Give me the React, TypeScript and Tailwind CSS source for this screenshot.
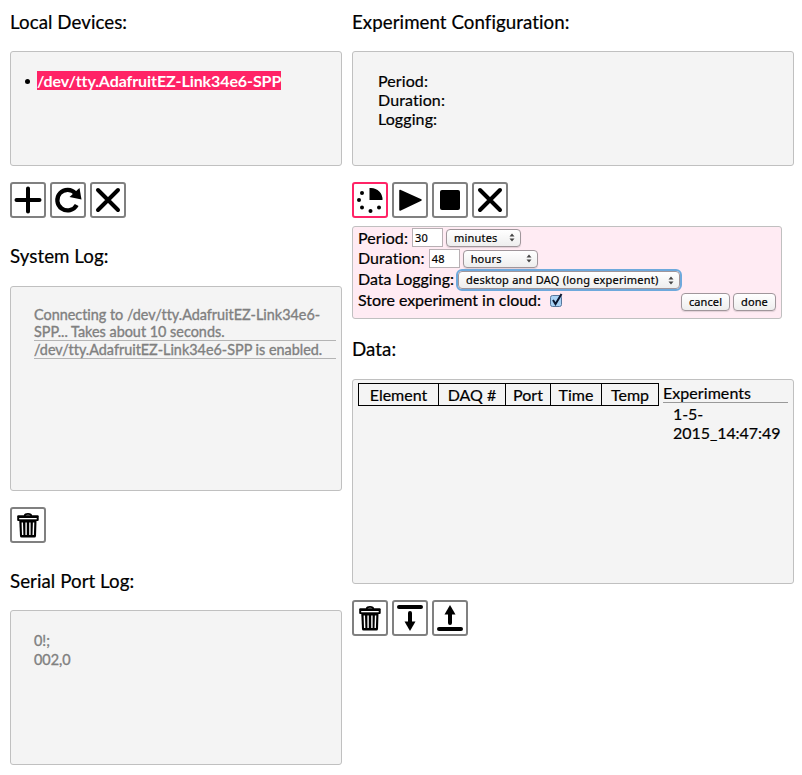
import type { ReactNode } from "react";

function IconButton({ label, active = false, children }: { label: string; active?: boolean; children: ReactNode }) {
  return (
    <button
      aria-label={label}
      className={`flex size-9 items-center justify-center rounded-[3px] border-2 bg-white ${active ? "border-[#ff2366]" : "border-[#808080]"}`}
    >
      <svg viewBox="0 0 32 32" className="size-8" fill="#000" stroke="#000" strokeWidth="0">
        {children}
      </svg>
    </button>
  );
}

const Plus = () => <path d="M16 4.500V27.500M4.500 16H27.500" strokeWidth="4" strokeLinecap="round" />;

const Cross = () => <path d="M6 6L26 26M26 6L6 26" strokeWidth="4" strokeLinecap="round" />;

const Refresh = () => (
  <>
    <path d="M24.700 21A10.300 10.300 0 1 1 23.500 9.500" fill="none" strokeWidth="4.200" />
    <path d="M27.500 4L29.500 15.500L17.500 13Z" />
  </>
);

const Trash = () => (
  <>
    <path d="M12.800 7.200V6.500Q12.800 4.800 16 4.800Q19.200 4.800 19.200 6.500V7.200" fill="none" strokeWidth="1.800" />
    <rect x="5.200" y="6.300" width="21.500" height="5.700" rx="1" />
    <rect x="7.200" y="9" width="17.500" height="1.300" fill="#fff" />
    <path d="M7.300 12H24.500L24 27Q23.900 28.500 22.500 28.500H9.500Q8.100 28.500 8 27Z" />
    <path d="M10.300 13.500L10.700 26M14.100 13.500V26M17.900 13.500V26M21.600 13.500L21.200 26" stroke="#fff" strokeWidth="1.400" />
  </>
);

function Heading({ className, children }: { className: string; children: ReactNode }) {
  return <h3 className={`text-[18.720px] leading-6 tracking-[0.060px] ${className}`}>{children}</h3>;
}

const panel = "rounded-[3px] border border-[#c0c0c0] bg-[#f4f4f4]";
const control =
  "rounded-[4px] border border-[#a0969b] bg-gradient-to-b from-white to-[#eeeeee] font-['Noto_Sans',sans-serif] text-[11px] leading-4 shadow-[0_1px_1px_rgba(0,0,0,0.12)]";

function SelectBox({ className, children }: { className: string; children: ReactNode }) {
  return (
    <button className={`flex h-[18px] items-center justify-between pr-[5px] pl-[7px] whitespace-nowrap ${control} ${className}`}>
      <span>{children}</span>
      <svg viewBox="0 0 6 9" className="h-[9px] w-[6px]" fill="#444">
        <path d="M3 0.500L5.500 3.500H0.500ZM3 8.500L0.500 5.500H5.500Z" />
      </svg>
    </button>
  );
}

function NumberBox({ children }: { children: ReactNode }) {
  return (
    <span className="ml-[4px] h-[19px] w-[31px] border border-[#b8b0b4] bg-white pl-[2px] font-['Noto_Sans',sans-serif] text-[11px] leading-[18px] tracking-[0.3px]">
      {children}
    </span>
  );
}

export default function App() {
  return (
    <main className="flex h-[775px] w-[802px] gap-[10px] overflow-hidden bg-white pl-[10px] font-[Lato,sans-serif] text-base leading-[19px] text-black [font-variant-ligatures:none] [-webkit-text-stroke:0.2px_currentColor]">
      <section className="w-[332px]">
        <Heading className="mt-[10px] mb-[17px]">Local Devices:</Heading>
        <div className={`h-[115px] pt-[19px] pl-[26px] ${panel}`}>
          <ul>
            <li className="relative">
              <span className="absolute top-[8px] left-[-12px] size-[5px] rounded-full bg-black" />
              <span className="inline-block h-[19px] bg-[#ff2366] font-bold tracking-[-0.090px] text-white [-webkit-text-stroke:0px]">/dev/tty.AdafruitEZ-Link34e6-SPP</span>
            </li>
          </ul>
        </div>
        <div className="mt-4 flex gap-1">
          <IconButton label="Add device"><Plus /></IconButton>
          <IconButton label="Refresh"><Refresh /></IconButton>
          <IconButton label="Disconnect"><Cross /></IconButton>
        </div>

        <Heading className="mt-[26px] mb-[18px]">System Log:</Heading>
        <div className={`h-[205px] pt-[19px] pr-[5px] pl-[23px] text-[14.400px] leading-[17px] text-[#808080] [-webkit-text-stroke:0.35px_currentColor] ${panel}`}>
          <p className="border-b border-[#b4b4b4]">
            Connecting to /dev/tty.AdafruitEZ-Link34e6-
            <br />
            SPP... Takes about 10 seconds.
          </p>
          <p className="border-b border-[#b4b4b4]">/dev/tty.AdafruitEZ-Link34e6-SPP is enabled.</p>
        </div>
        <div className="mt-4">
          <IconButton label="Clear system log"><Trash /></IconButton>
        </div>

        <Heading className="mt-[26px] mb-[17px]">Serial Port Log:</Heading>
        <div className={`h-[155px] pt-[20px] pl-[23px] text-[14.400px] text-[#808080] [-webkit-text-stroke:0.35px_currentColor] ${panel}`}>
          <p>0!;</p>
          <p>002,0</p>
        </div>
      </section>

      <section className="w-[442px]">
        <Heading className="mt-[10px] mb-[17px]">Experiment Configuration:</Heading>
        <div className={`h-[115px] pt-[19px] pl-[25px] tracking-[0.1px] ${panel}`}>
          <p>Period:</p>
          <p>Duration:</p>
          <p>Logging:</p>
        </div>
        <div className="mt-4 flex gap-1">
          <IconButton label="Configure experiment" active>
            <path d="M15.500 16V4H17A11.500 11.500 0 0 1 28.500 16Z" />
            <circle cx="8" cy="9" r="2" />
            <circle cx="5" cy="16" r="2" />
            <circle cx="8" cy="23.500" r="2" />
            <circle cx="16.500" cy="27" r="2" />
            <circle cx="25" cy="23.500" r="2" />
          </IconButton>
          <IconButton label="Start">
            <path d="M6 6.500L27 16L6 26Z" strokeWidth="1.500" strokeLinejoin="round" />
          </IconButton>
          <IconButton label="Stop">
            <rect x="6" y="6" width="20" height="20" rx="2" />
          </IconButton>
          <IconButton label="Cancel experiment"><Cross /></IconButton>
        </div>

        <form className="mt-2 h-[93px] w-[430px] rounded-[3px] border border-[#c0c0c0] bg-[#ffebf3] pr-[5px] pl-[5px]">
          <div className="flex h-[21px] items-center">
            <span className="w-[50px] tracking-[0.1px]">Period:</span>
            <NumberBox>30</NumberBox>
            <SelectBox className="ml-[3px] w-[75px] tracking-[0.2px]">minutes</SelectBox>
          </div>
          <div className="flex h-[21px] items-center">
            <span className="-mt-[2px] tracking-[0.060px]">Duration:</span>
            <NumberBox>48</NumberBox>
            <SelectBox className="ml-[3px] w-[75px] tracking-[0.2px]">hours</SelectBox>
          </div>
          <div className="flex h-[21px] items-center">
            <span className="-mt-[2px]">Data Logging:</span>
            <SelectBox className="mt-[1px] ml-[4px] w-[222px] tracking-[0.230px] outline-2 outline-[#6ea9dc]">desktop and DAQ (long experiment)</SelectBox>
          </div>
          <div className="flex h-[21px] items-center">
            <span className="-mt-[2px] tracking-[-0.040px]">Store experiment in cloud:</span>
            <svg viewBox="0 0 15 16" className="-mt-[2px] ml-[8px] h-4 w-[15px]">
              <rect x="1.500" y="3.500" width="11" height="11" rx="2" fill="#a9d2f5" stroke="#57779d" />
              <path d="M4 8L6.500 12L12.500 2" fill="none" stroke="#0b1730" strokeWidth="2" />
            </svg>
            <button className={`mt-[2px] ml-auto h-[18px] w-[49px] tracking-[0.1px] ${control}`}>cancel</button>
            <button className={`mt-[2px] ml-[3px] h-[18px] w-[43px] tracking-[0.1px] ${control}`}>done</button>
          </div>
        </form>

        <Heading className="mt-[18px] mb-[18px]">Data:</Heading>
        <div className={`flex h-[205px] items-start pt-[3px] pl-[5px] ${panel}`}>
          <table className="w-[301px] table-fixed border-collapse text-center">
            <colgroup>
              <col className="w-[80px]" />
              <col className="w-[67px]" />
              <col className="w-[45px]" />
              <col className="w-[51px]" />
              <col className="w-[57px]" />
            </colgroup>
            <thead>
              <tr className="h-[22px]">
                {["Element", "DAQ #", "Port", "Time", "Temp"].map((name) => (
                  <th key={name} className="border border-black p-0 font-normal">{name}</th>
                ))}
              </tr>
            </thead>
          </table>
          <aside className="ml-[4px] w-[125px]">
            <div className="h-[20px] border-b border-[#999] tracking-[0.060px]">Experiments</div>
            <p className="pt-[1px] pl-[10px] tracking-[-0.060px]">1-5-<br />2015_14:47:49</p>
          </aside>
        </div>
        <div className="mt-4 flex gap-1">
          <IconButton label="Delete data"><Trash /></IconButton>
          <IconButton label="Download">
            <path d="M5 5H27" strokeWidth="4" strokeLinecap="round" />
            <path d="M16 11V21" strokeWidth="4" strokeLinecap="round" />
            <path d="M10.500 19.500H21.500L16 29Z" />
          </IconButton>
          <IconButton label="Upload">
            <path d="M5 27H27" strokeWidth="4" strokeLinecap="round" />
            <path d="M16 11V21" strokeWidth="4" strokeLinecap="round" />
            <path d="M10.500 12.500H21.500L16 3Z" />
          </IconButton>
        </div>
      </section>
    </main>
  );
}
